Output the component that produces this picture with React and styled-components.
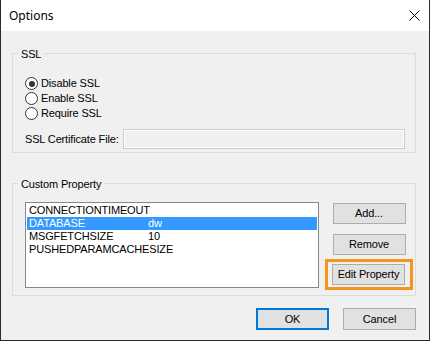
import React from "react";
import styled, { createGlobalStyle } from "styled-components";

const GlobalStyle = createGlobalStyle`
  html, body { margin: 0; padding: 0; background: #ffffff; }
  * { box-sizing: border-box; }
`;

const Window = styled.div`
  width: 430px;
  height: 341px;
  display: flex;
  flex-direction: column;
  border: 1px solid #2b2b2b;
  border-top: none;
  background: #f0f0f0;
  font-family: "Liberation Sans", Arial, sans-serif;
  font-size: 11px;
  letter-spacing: -0.15px;
  color: #000;
`;

const TitleBar = styled.div`
  height: 31px;
  flex: 0 0 31px;
  background: #ffffff;
  display: flex;
  align-items: center;
  justify-content: space-between;
  padding: 0 9px 0 8px;
  letter-spacing: 0;
`;

const Title = styled.span`
  font-family: "Noto Sans", "Open Sans", sans-serif;
  font-size: 12px;
  line-height: 16px;
  color: #000;
`;

const CloseIcon = styled.svg`
  width: 11px;
  height: 11px;
  display: block;
  margin-top: -1px;
`;

const Body = styled.div`
  flex: 1;
  display: flex;
  flex-direction: column;
  padding: 15px 13px 10px 11px;
`;

const Group = styled.fieldset`
  margin: 0 0 ${(p) => p.$gap || 0}px 0;
  min-width: 0;
  padding: 0 0 0 5px;
  border: 1px solid #dcdcdc;
`;

const Legend = styled.legend`
  padding: 2px 3px 0 3px;
  font-size: 11px;
  line-height: 12px;
  color: #000;
`;

const SslContent = styled.div`
  display: flex;
  flex-direction: column;
  padding: 16px 10px 3px 7px;
`;

const RadioList = styled.div`
  display: flex;
  flex-direction: column;
`;

const RadioRow = styled.label`
  height: 15px;
  display: flex;
  align-items: center;
  gap: 3px;
  line-height: 15px;
`;

const RadioCircle = styled.span`
  width: 13px;
  height: 13px;
  border-radius: 50%;
  border: 1px solid #333333;
  background: #ffffff;
  display: flex;
  align-items: center;
  justify-content: center;
  &::after {
    content: "";
    width: 6px;
    height: 6px;
    border-radius: 50%;
    background: ${(p) => (p.$checked ? "#333333" : "transparent")};
  }
`;

const CertRow = styled.div`
  margin-top: 8px;
  display: flex;
  align-items: center;
  height: 20px;
`;

const CertLabel = styled.span`
  width: 98px;
  flex: 0 0 98px;
  line-height: 13px;
  margin-top: 1px;
`;

const TextBox = styled.div`
  flex: 1;
  height: 20px;
  border: 1px solid #cccccc;
  box-shadow: inset 0 0 0 1px #ffffff;
  background: #f0f0f0;
`;

const PropContent = styled.div`
  display: flex;
  align-items: flex-start;
  gap: 6px;
  padding: 12px 2px 5px 7px;
`;

const ListBox = styled.div`
  flex: 1;
  height: 86px;
  border: 1px solid #828790;
  background: #ffffff;
  padding: 1px;
  display: flex;
  flex-direction: column;
`;

const ListRow = styled.div`
  height: 13px;
  line-height: 13px;
  display: grid;
  grid-template-columns: 119px 1fr;
  padding-left: 2px;
  white-space: nowrap;
  background: ${(p) => (p.$selected ? "#3399ff" : "transparent")};
  color: ${(p) => (p.$selected ? "#ffffff" : "#000000")};
`;

const SideColumn = styled.div`
  width: 88px;
  flex: 0 0 88px;
  margin-top: 1px;
  display: flex;
  flex-direction: column;
  align-items: center;
`;

const SideStack = styled.div`
  display: flex;
  flex-direction: column;
  gap: 10px;
`;

const FocusRing = styled.div`
  margin-top: 4px;
  width: 88px;
  border: 3px solid #f7941e;
  padding: 2px 0 2px 4px;
  display: flex;
`;

const Button = styled.button`
  width: 73px;
  height: ${(p) => (p.$tall ? 22 : 21)}px;
  padding: 0;
  margin: 0;
  background: #e1e1e1;
  border: ${(p) => (p.$default ? "2px solid #0078d7" : "1px solid #adadad")};
  font-family: "Liberation Sans", Arial, sans-serif;
  font-size: 11px;
  letter-spacing: -0.15px;
  line-height: 13px;
  color: #000;
  display: flex;
  align-items: center;
  justify-content: center;
`;

const Footer = styled.div`
  margin-top: 12px;
  display: flex;
  justify-content: flex-end;
  gap: 14px;
`;

const properties = [
  { name: "CONNECTIONTIMEOUT", value: "" },
  { name: "DATABASE", value: "dw", selected: true },
  { name: "MSGFETCHSIZE", value: "10" },
  { name: "PUSHEDPARAMCACHESIZE", value: "" },
];

const radios = [
  { label: "Disable SSL", checked: true },
  { label: "Enable SSL" },
  { label: "Require SSL" },
];

export default function App() {
  return (
    <>
      <GlobalStyle />
      <Window>
        <TitleBar>
          <Title>Options</Title>
          <CloseIcon viewBox="0 0 11 11">
            <path d="M0.5 0.5 L10.5 10.5 M10.5 0.5 L0.5 10.5" stroke="#000" strokeWidth="1" fill="none" />
          </CloseIcon>
        </TitleBar>
        <Body>
          <Group $gap={23}>
            <Legend>SSL</Legend>
            <SslContent>
              <RadioList>
                {radios.map((r) => (
                  <RadioRow key={r.label}>
                    <RadioCircle $checked={r.checked} />
                    <span>{r.label}</span>
                  </RadioRow>
                ))}
              </RadioList>
              <CertRow>
                <CertLabel>SSL Certificate File:</CertLabel>
                <TextBox />
              </CertRow>
            </SslContent>
          </Group>
          <Group>
            <Legend>Custom Property</Legend>
            <PropContent>
              <ListBox>
                {properties.map((p) => (
                  <ListRow key={p.name} $selected={p.selected}>
                    <span>{p.name}</span>
                    <span>{p.value}</span>
                  </ListRow>
                ))}
              </ListBox>
              <SideColumn>
                <SideStack>
                  <Button>Add...</Button>
                  <Button>Remove</Button>
                </SideStack>
                <FocusRing>
                  <Button>Edit Property</Button>
                </FocusRing>
              </SideColumn>
            </PropContent>
          </Group>
          <Footer>
            <Button $tall $default>OK</Button>
            <Button $tall>Cancel</Button>
          </Footer>
        </Body>
      </Window>
    </>
  );
}
